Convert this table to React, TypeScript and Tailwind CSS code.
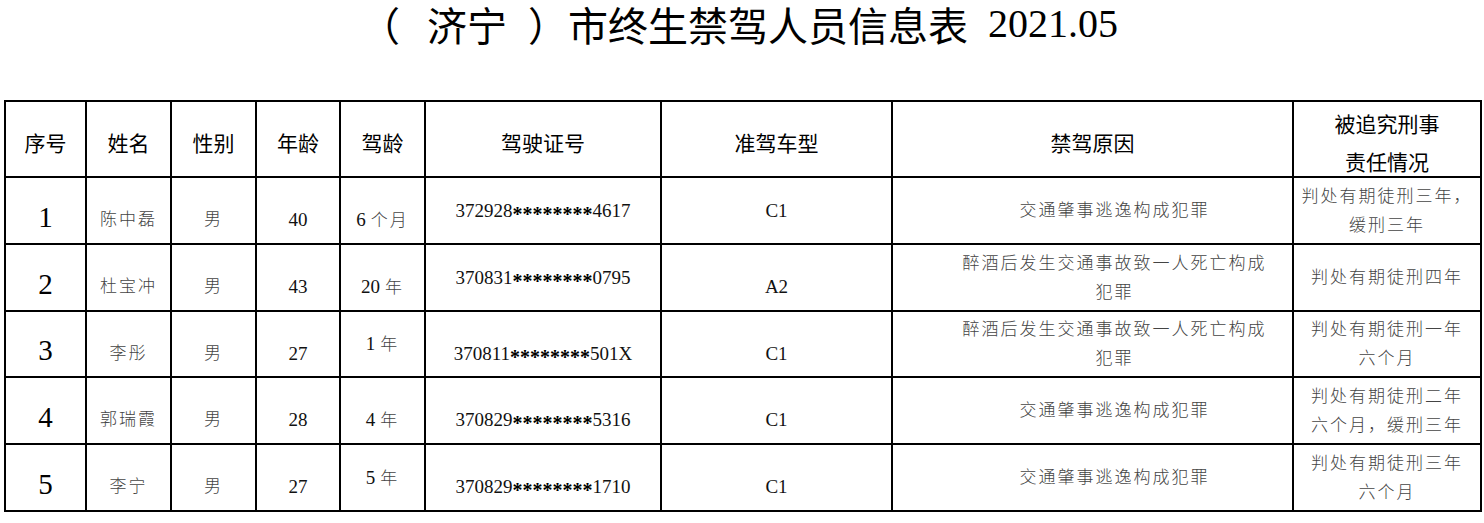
import React from "react";

type Row = {
  no: string;
  name: string;
  age: string;
  dage: string;
  idA: string;
  idB: string;
  type: string;
  reason: string[];
  result: string[];
  nameB: boolean;
  dageB: boolean;
  idBottom: boolean;
  typeB: boolean;
};

const rows: Row[] = [
  {
    no: "1",
    name: "陈中磊",
    age: "40",
    dage: "6 个月",
    idA: "372928",
    idB: "4617",
    type: "C1",
    reason: ["交通肇事逃逸构成犯罪"],
    result: ["判处有期徒刑三年，", "缓刑三年"],
    nameB: true,
    dageB: true,
    idBottom: false,
    typeB: false,
  },
  {
    no: "2",
    name: "杜宝冲",
    age: "43",
    dage: "20 年",
    idA: "370831",
    idB: "0795",
    type: "A2",
    reason: ["醉酒后发生交通事故致一人死亡构成", "犯罪"],
    result: ["判处有期徒刑四年"],
    nameB: true,
    dageB: true,
    idBottom: false,
    typeB: true,
  },
  {
    no: "3",
    name: "李彤",
    age: "27",
    dage: "1 年",
    idA: "370811",
    idB: "501X",
    type: "C1",
    reason: ["醉酒后发生交通事故致一人死亡构成", "犯罪"],
    result: ["判处有期徒刑一年", "六个月"],
    nameB: true,
    dageB: false,
    idBottom: true,
    typeB: true,
  },
  {
    no: "4",
    name: "郭瑞霞",
    age: "28",
    dage: "4 年",
    idA: "370829",
    idB: "5316",
    type: "C1",
    reason: ["交通肇事逃逸构成犯罪"],
    result: ["判处有期徒刑二年", "六个月，缓刑三年"],
    nameB: true,
    dageB: true,
    idBottom: true,
    typeB: true,
  },
  {
    no: "5",
    name: "李宁",
    age: "27",
    dage: "5 年",
    idA: "370829",
    idB: "1710",
    type: "C1",
    reason: ["交通肇事逃逸构成犯罪"],
    result: ["判处有期徒刑三年", "六个月"],
    nameB: true,
    dageB: false,
    idBottom: true,
    typeB: true,
  },
];

const cellBase =
  "border-r-2 border-b-2 border-black flex flex-col items-center justify-center text-center";

function Head({ children }: { children: React.ReactNode }) {
  return (
    <div
      className={`${cellBase} pt-[6px] text-[21px] leading-[38px] text-black font-['Noto_Sans_CJK_SC',sans-serif]`}
    >
      {children}
    </div>
  );
}

function Body({
  children,
  bottom,
  cjk,
  extra,
}: {
  children: React.ReactNode;
  bottom?: boolean;
  cjk?: boolean;
  extra?: string;
}) {
  return (
    <div
      className={`${cellBase} ${bottom ? "pt-[18px]" : ""} ${extra ?? ""} ${
        cjk ? "tracking-[2px] text-[17px] font-light text-[#444]" : "text-[19px] text-[#111]"
      } leading-[29px] font-['Liberation_Serif','Noto_Sans_CJK_SC',serif]`}
    >
      {children}
    </div>
  );
}

export default function App() {
  return (
    <div className="w-[1484px] h-[523px] bg-white overflow-hidden">
      <div className="h-[47px] flex items-center justify-center pr-[6px] text-[40px] leading-none text-black font-['Noto_Sans_CJK_SC',sans-serif]">
        <span>（</span>
        <span className="inline-block w-[27px]" />
        <span>济宁</span>
        <span className="inline-block w-[21px]" />
        <span>）市终生禁驾人员信息表</span>
        <span className="inline-block w-[20px]" />
        <span className="font-['Liberation_Serif',serif]">2021.05</span>
      </div>
      <div className="mt-[53px] ml-[4px] w-[1478px] border-t-2 border-l-2 border-black grid grid-cols-[81px_85px_85px_84px_85px_236px_231px_401px_188px] grid-rows-[76px_67px_67px_66px_67px_67px]">
        <Head>序号</Head>
        <Head>姓名</Head>
        <Head>性别</Head>
        <Head>年龄</Head>
        <Head>驾龄</Head>
        <Head>驾驶证号</Head>
        <Head>准驾车型</Head>
        <Head>禁驾原因</Head>
        <Head>
          <span>被追究刑事</span>
          <span>责任情况</span>
        </Head>
        {rows.map((r) => (
          <React.Fragment key={r.no}>
            <div
              className={`${cellBase} pt-[12px] text-[29px] leading-[32px] text-black font-['Liberation_Serif',serif]`}
            >
              {r.no}
            </div>
            <Body bottom={r.nameB} cjk>
              {r.name}
            </Body>
            <Body bottom={r.nameB} cjk>
              男
            </Body>
            <Body bottom={r.nameB}>{r.age}</Body>
            <Body bottom={r.dageB}>
              <span>
                {r.dage.split(" ")[0]}
                <span className="tracking-[2px] text-[17px] font-light text-[#444] ml-[5px]">
                  {r.dage.split(" ")[1]}
                </span>
              </span>
            </Body>
            <Body bottom={r.idBottom}>
              <span className="whitespace-nowrap">
                {r.idA}
                <span className="inline-block translate-y-[4px] font-bold text-[20px] text-black">
                  ********
                </span>
                {r.idB}
              </span>
            </Body>
            <Body bottom={r.typeB}>{r.type}</Body>
            <Body cjk extra="pl-[44px]">
              {r.reason.map((l, i) => (
                <span key={i} className="whitespace-nowrap">
                  {l}
                </span>
              ))}
            </Body>
            <Body cjk>
              {r.result.map((l, i) => (
                <span key={i} className="whitespace-nowrap">
                  {l}
                </span>
              ))}
            </Body>
          </React.Fragment>
        ))}
      </div>
    </div>
  );
}
